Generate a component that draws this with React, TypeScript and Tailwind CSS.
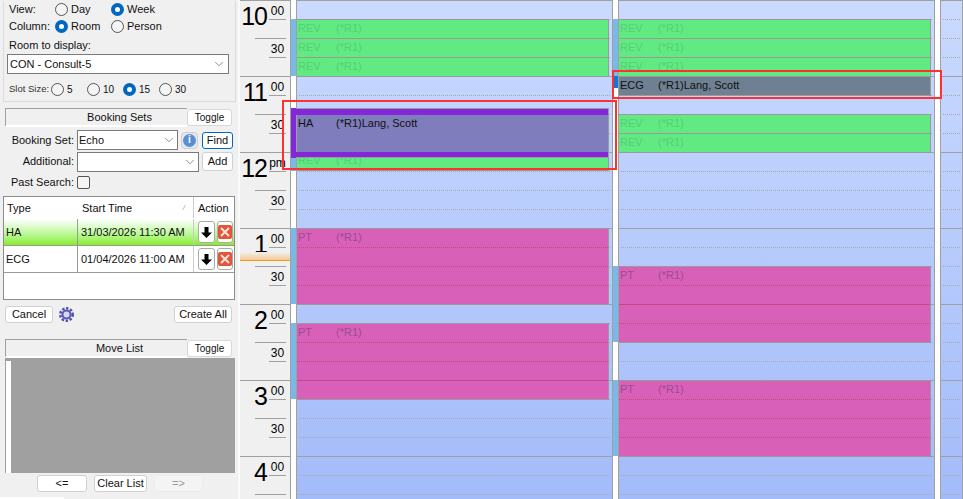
import React from 'react';
import { ChevronDown } from 'lucide-react';

const font = "font-['Liberation_Sans',Arial,sans-serif]";

const Radio = ({ on, label, small }: { on?: boolean; label: string; small?: boolean }) => (
  <div className="flex items-center">
    <div
      className={`w-[13px] h-[13px] rounded-full flex items-center justify-center ${
        on ? 'bg-[#0067c0]' : 'border border-[#555] bg-[#f4f4f4]'
      }`}
    >
      {on && <div className="w-[5px] h-[5px] rounded-full bg-white" />}
    </div>
    <span className={small ? 'ml-[3px] text-[10px]' : 'ml-[3px] text-[11px]'}>{label}</span>
  </div>
);

const Btn = ({ label, className, small }: { label: string; className: string; small?: boolean }) => (
  <div
    className={`flex items-center justify-center whitespace-nowrap border rounded-[3px] ${small ? 'text-[10px]' : 'text-[11px]'} ${className}`}
  >
    {label}
  </div>
);

const SectionHeader = ({ title }: { title: string }) => (
  <div className="flex h-[19px] ml-[5px] w-[228px]">
    <div className="w-[182px] border-t border-l border-[#a0a0a0] border-b-2 border-b-white flex items-center justify-center pl-[46px] text-[11px]">
      {title}
    </div>
    <Btn small label="Toggle" className="w-[45px] h-[17px] mt-[1px] bg-white border-[#d8d8d8]" />
  </div>
);

const ActionButtons = () => (
  <div className="flex gap-[2px] pl-[4px]">
    <div className="w-[17px] h-[22px] bg-white border border-[#aaa] rounded-[3px] flex items-center justify-center">
      <svg width="11" height="11" viewBox="0 0 11 11">
        <path d="M3.5 0h4v5.5H11L5.5 11 0 5.5h3.5z" fill="#000" />
      </svg>
    </div>
    <div className="w-[16px] h-[22px] bg-white border border-[#aaa] rounded-[3px] flex items-center justify-center">
      <div className="w-[14px] h-[14px] bg-[#e2553a] rounded-[2px] flex items-center justify-center">
        <svg width="10" height="10" viewBox="0 0 10 10">
          <path d="M1 1l8 8M9 1l-8 8" stroke="#f8e4dc" strokeWidth="2" />
        </svg>
      </div>
    </div>
  </div>
);

const Sidebar = () => (
  <div className="w-[240px] shrink-0 bg-[#f0f0f0] border-r-2 border-[#fafafa] text-[#111] h-[499px] overflow-hidden relative">
    {/* view options */}
    <div className="ml-[3px] w-[233px] h-[101px] border-l border-b border-r border-[#dcdcdc]">
      <div className="flex h-[17px] items-center mt-[1px]">
        <span className="w-[51px] pl-[5px] text-[11px]">View:</span>
        <div className="w-[56px]"><Radio label="Day" /></div>
        <Radio on label="Week" />
      </div>
      <div className="flex h-[17px] items-center">
        <span className="w-[51px] pl-[5px] text-[11px]">Column:</span>
        <div className="w-[56px]"><Radio on label="Room" /></div>
        <Radio label="Person" />
      </div>
      <div className="pl-[5px] mt-[2px] h-[17px] text-[11px] leading-[17px]">Room to display:</div>
      <div className="ml-[3px] w-[222px] h-[20px] bg-white border border-[#7a7a7a] flex items-center justify-between pl-[2px] pr-[2px] text-[11px]">
        <span>CON - Consult-5</span>
        <ChevronDown size={14} strokeWidth={1} color="#444" />
      </div>
      <div className="flex items-center h-[14px] mt-[8px] pl-[5px]">
        <span className="w-[42px] text-[9.5px] text-[#333] whitespace-nowrap">Slot Size:</span>
        <div className="w-[36px]"><Radio small label="5" /></div>
        <div className="w-[36px]"><Radio small label="10" /></div>
        <div className="w-[36px]"><Radio small on label="15" /></div>
        <Radio small label="30" />
      </div>
    </div>

    <div className="mt-[6px]">
      <SectionHeader title="Booking Sets" />
    </div>

    {/* booking set form */}
    <div className="mt-[3px] text-[11px]">
      <div className="flex items-center h-[20px]">
        <span className="w-[74px] text-right">Booking Set:</span>
        <div className="ml-[3px] w-[101px] h-[20px] bg-white border border-[#7a7a7a] flex items-center justify-between pl-[1px] pr-[1px]">
          <span>Echo</span>
          <ChevronDown size={14} strokeWidth={1} color="#444" />
        </div>
        <div className="ml-[3px] w-[17px] h-[17px] rounded-[4px] bg-[#e4e8f0] border border-[#d0d0d0] flex items-center justify-center">
          <div className="w-[13px] h-[13px] rounded-full bg-[#5a8fd0] flex items-center justify-center text-white text-[10px] font-bold leading-none">
            i
          </div>
        </div>
        <div className="ml-[4px] w-[31px] h-[17px] bg-white border border-[#0067c0] rounded-[3px] flex items-center justify-center">
          Find
        </div>
      </div>
      <div className="flex items-center h-[21px] mt-[1px]">
        <span className="w-[74px] text-right">Additional:</span>
        <div className="ml-[3px] w-[122px] h-[20px] bg-white border border-[#7a7a7a] flex items-center justify-end pr-[1px]">
          <ChevronDown size={14} strokeWidth={1} color="#444" />
        </div>
        <Btn label="Add" className="ml-[3px] w-[31px] h-[19px] bg-white border-[#d0d0d0]" />
      </div>
      <div className="flex items-center h-[21px]">
        <span className="w-[74px] text-right">Past Search:</span>
        <div className="ml-[3px] w-[13px] h-[13px] border border-[#555] rounded-[2px] bg-[#f4f4f4]" />
      </div>
    </div>

    {/* bookings table */}
    <div className="ml-[3px] mt-[3px] w-[232px] h-[104px] bg-white border border-[#8c8c8c] text-[11px] leading-[14px] whitespace-nowrap">
      <div className="flex h-[22px] items-center pb-[1px]">
        <div className="w-[74px] pl-[3px]">Type</div>
        <div className="w-[115px] pl-[4px] h-full flex items-center justify-between pr-[8px]">
          <span>Start Time</span>
          <span className="text-[8px] text-[#999] italic">/</span>
        </div>
        <div className="flex-1 h-full border-l border-[#ccc] pl-[4px] flex items-center">Action</div>
      </div>
      <div className="flex h-[27px] items-center border-b border-[#9a9a9a] bg-gradient-to-b from-white to-[#86ee0e]">
        <div className="w-[74px] pl-[2px] border-r border-[#9a9a9a] h-full flex items-center pb-[1px]">HA</div>
        <div className="w-[115px] pl-[3px] pb-[1px]">31/03/2026 11:30 AM</div>
        <div className="flex-1 h-full border-l border-[#ccc] flex items-center"><ActionButtons /></div>
      </div>
      <div className="flex h-[27px] items-center border-b border-[#9a9a9a]">
        <div className="w-[74px] pl-[2px] border-r border-[#9a9a9a] h-full flex items-center pb-[1px]">ECG</div>
        <div className="w-[115px] pl-[3px] pb-[1px]">01/04/2026 11:00 AM</div>
        <div className="flex-1 h-full border-l border-[#ccc] flex items-center"><ActionButtons /></div>
      </div>
    </div>

    <div className="flex items-center ml-[5px] w-[227px] mt-[6px] h-[17px]">
      <Btn label="Cancel" className="w-[48px] h-[17px] bg-white border-[#d0d0d0]" />
      <svg className="ml-[5px]" width="17" height="17" viewBox="0 0 17 17">
        <circle cx="8.5" cy="8.5" r="6.2" fill="none" stroke="#5252a8" strokeWidth="2.6" strokeDasharray="2.4 1.6" />
        <circle cx="8.5" cy="8.5" r="5" fill="#5a5ab4" />
        <circle cx="8.5" cy="8.5" r="3" fill="#d8d8f4" />
      </svg>
      <div className="flex-1" />
      <Btn label="Create All" className="w-[58px] h-[17px] bg-white border-[#d0d0d0]" />
    </div>

    <div className="mt-[16px]">
      <SectionHeader title="Move List" />
    </div>

    {/* move list */}
    <div className="ml-[5px] w-[230px] h-[115px] bg-[#a0a0a0] pt-[3px] pl-[1px]">
      <div className="w-[5px] h-full bg-white" />
    </div>
    <div className="flex mt-[2px] pl-[37px] gap-[7px] h-[17px]">
      <Btn label="<=" className="w-[50px] h-[17px] bg-white border-[#d0d0d0]" />
      <Btn label="Clear List" className="w-[53px] h-[17px] bg-white border-[#d0d0d0]" />
      <Btn label="=>" className="w-[49px] h-[17px] bg-[#f4f4f4] border-[#ececec] text-[#999]" />
    </div>
    <div className="absolute bottom-0 left-0 w-[64px] h-[2px] bg-white" />
  </div>
);

const hours = [
  { big: '10', top: '00' },
  { big: '11', top: '00' },
  { big: '12', top: 'pm' },
  { big: '1', top: '00' },
  { big: '2', top: '00' },
  { big: '3', top: '00' },
  { big: '4', top: '00' },
];

const TimeRuler = () => (
  <div className="w-[50px] shrink-0 bg-[#f0f0f0] relative text-black">
    {hours.map((h) => (
      <div key={h.big} className="h-[76px] border-t border-[#a0a0a0] flex">
        <div className="w-[29px] pr-[2px] text-right text-[25px] tracking-[-1px] leading-[27px] pt-[2px]">{h.big}</div>
        <div className="flex-1 pr-[4px]">
          <div className="h-[19px] w-[17px] border-b border-[#a0a0a0] text-[12px] leading-[21px] text-center whitespace-nowrap">{h.top}</div>
          <div className="h-[19px] border-b border-[#a0a0a0] -ml-[14px] w-[31px]" />
          {h.big !== '4' && (
            <div className="h-[19px] w-[17px] border-b border-[#a0a0a0] text-[12px] leading-[21px] text-center">30</div>
          )}
        </div>
      </div>
    ))}
    {/* current time marker */}
    <div className="absolute left-0 top-[252px] w-[50px] h-[9px] bg-gradient-to-b from-[#f0f0f0] to-[#f5c890] border-b border-[#f59a1e]" />
  </div>
);

type Appt = {
  top: number;
  height: number;
  color: string;
  marker?: string;
  label: string;
  info: string;
  faded?: boolean;
};

const rev = (top: number, marker = true): Appt => ({
  top,
  height: 19,
  color: 'bg-[#62ea82]',
  marker: marker ? 'bg-[#7ab8e8]' : undefined,
  label: 'REV',
  info: '(*R1)',
  faded: true,
});
const pt = (top: number): Appt => ({ top, height: 76, color: 'bg-[#d960b8]', marker: 'bg-[#7ab8e8]', label: 'PT', info: '(*R1)' });

const col1: Appt[] = [rev(19), rev(38), rev(57), pt(228), pt(323)];
const col2: Appt[] = [rev(19), rev(38), rev(57), rev(114, false), rev(133, false), pt(266), pt(380)];

const Slots = () => (
  <>
    {Array.from({ length: 7 }).map((_, i) => (
      <div key={i} className="h-[76px] border-t border-[#a0a0a0]">
        {[0, 1, 2].map((n) => (
          <div key={n} className="h-[19px] border-b border-dotted border-[#a8a8a8] mx-[2px]" />
        ))}
      </div>
    ))}
  </>
);

const Appointment = ({ a }: { a: Appt }) => (
  <>
    {a.marker && (
      <div className={`absolute -left-[6px] w-[5px] ${a.marker}`} style={{ top: a.top, height: a.height }} />
    )}
    <div
      className={`absolute left-0 right-[3px] border border-[#9a9a9a] border-l-0 overflow-hidden ${a.color}`}
      style={{ top: a.top, height: a.height + 1 }}
    >
      {a.height > 19 && (
        <div className="absolute inset-x-0 top-0">
          {[1, 2, 3].map((n) => (
            <div
              key={n}
              className={`h-[19px] border-b border-[#c8487e] ${(a.top + n * 19) % 76 === 0 ? 'border-solid' : 'border-dotted'}`}
            />
          ))}
        </div>
      )}
      <div className="relative flex pl-[1px] text-[11px] leading-[16px]">
        <span className={`w-[38px] ${a.faded ? 'text-[#55cf78]' : 'text-[#9c4c90]'}`}>{a.label}</span>
        <span className={a.faded ? 'text-[#55cf78]' : 'text-[#9c4c90]'}>{a.info}</span>
      </div>
    </div>
  </>
);

const Column = ({
  items,
  children,
  width,
  gutter,
}: {
  items: Appt[];
  children?: React.ReactNode;
  width: string;
  gutter: string;
}) => (
  <div className={`flex shrink-0 ${width}`}>
    <div className={`shrink-0 bg-white ${gutter}`} />
    <div className="relative flex-1 border-l border-r border-[#a0a0a0]">
      <Slots />
      {items.map((a, i) => (
        <Appointment key={i} a={a} />
      ))}
      {children}
    </div>
  </div>
);

export default function App() {
  return (
    <div className={`w-[963px] h-[499px] overflow-hidden flex relative ${font}`}>
      <Sidebar />
      <TimeRuler />
      <div className="flex-1 relative overflow-hidden h-[499px]">
        <div className="absolute inset-0 flex bg-gradient-to-b from-[#cadaff] to-[#a3bbf9]">
          <Column width="w-[323px]" gutter="w-[6px] border-l border-[#a0a0a0]" items={col1}>
            {/* green slot under HA */}
            <div className="absolute -left-[6px] top-[152px] w-[5px] h-[19px] bg-[#7ab8e8]" />
            <div className="absolute left-0 right-[3px] top-[152px] h-[19px] bg-[#62ea82] border-b border-r border-[#9a9a9a] pl-[1px] text-[11px] leading-[16px] text-[#55cf78]">
              <span className="inline-block w-[38px]">REV</span>(*R1)
            </div>
            {/* HA booking */}
            <div className="absolute left-0 right-[3px] top-[108px] h-[50px] border border-[#9a9a9a] border-l-0 bg-[#7f7dbb]">
              <div className="h-[6px] bg-[#8427d8]" />
              <div className="flex pl-[1px] text-[11px] leading-[16px] text-[#111]">
                <span className="w-[38px]">HA</span>
                <span>(*R1)Lang, Scott</span>
              </div>
              <div className="absolute bottom-0 inset-x-0 h-[5px] bg-[#8427d8]" />
            </div>
            <div className="absolute -left-[6px] top-[108px] w-[5px] h-[50px] bg-[#8427d8]" />
            <div className="absolute -left-px top-[109px] w-px h-[6px] bg-[#8427d8]" />
            <div className="absolute -left-px top-[152px] w-px h-[5px] bg-[#8427d8]" />
          </Column>
          <Column width="w-[322px]" gutter="w-[5px]" items={col2}>
            {/* ECG booking */}
            <div className="absolute -left-[6px] top-[76px] w-[5px] h-[12px] bg-[#0a78d8]" />
            <div className="absolute left-0 right-[3px] top-[76px] h-[20px] border border-[#9a9a9a] border-l-0 bg-[#6f8093] flex pl-[1px] text-[11px] leading-[16px] text-[#111]">
              <span className="w-[38px]">ECG</span>
              <span>(*R1)Lang, Scott</span>
            </div>
          </Column>
          <Column width="w-[28px]" gutter="w-[5px]" items={[]} />
        </div>
      </div>
      {/* red highlight boxes */}
      <div className="absolute left-[282px] top-[100px] w-[335px] h-[70px] border-2 border-[#ff3030]" />
      <div className="absolute left-[612px] top-[70px] w-[330px] h-[29px] border-2 border-[#ff3030]" />
    </div>
  );
}
